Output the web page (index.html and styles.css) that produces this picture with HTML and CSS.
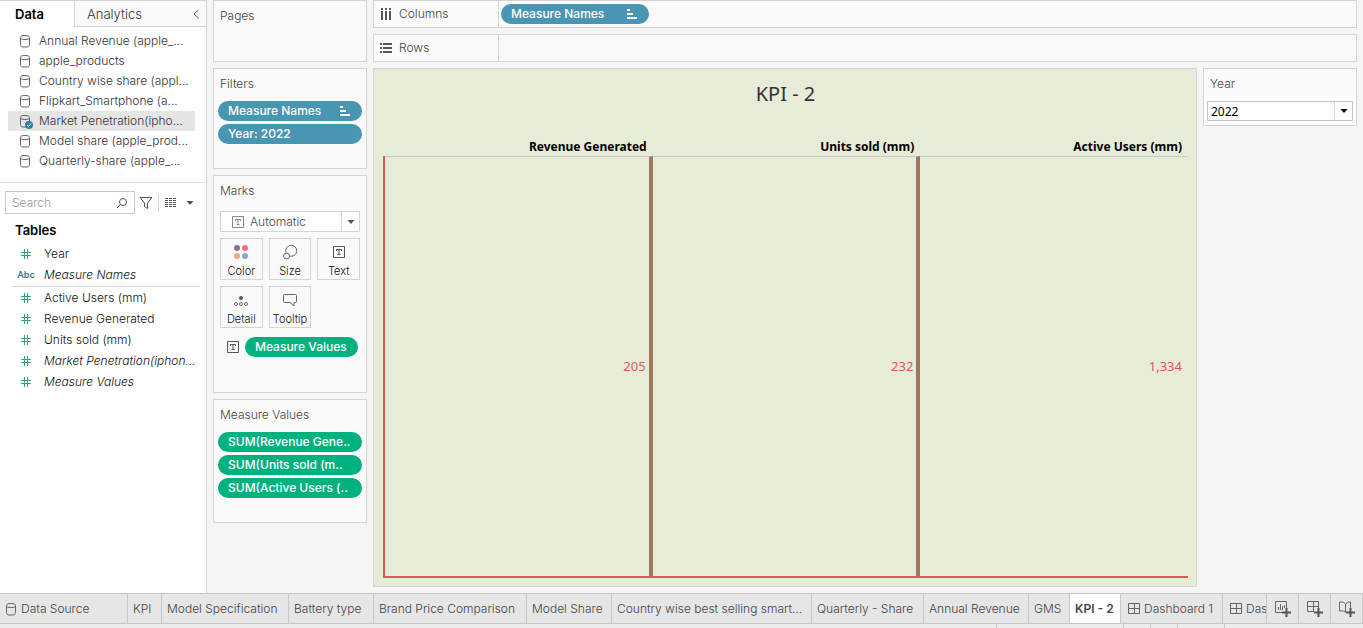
FILE: index.html
```html
<!DOCTYPE html>
<html lang="en">
<head>
<meta charset="utf-8">
<title>KPI - 2</title>
<link rel="stylesheet" href="styles.css">
</head>
<body>
<svg class="defs" aria-hidden="true">
  <symbol id="db" viewBox="0 0 12 14"><path d="M1.500 3.500v7c0 1.500 1 2.500 2.500 2.500h4c1.500 0 2.500-1 2.500-2.500v-7M1.500 3.500C1.500 2 3 1.500 6 1.500s4.500.5 4.500 2S9 5.500 6 5.500 1.500 5 1.500 3.500z" fill="none" stroke="#666"/></symbol>
  <symbol id="hash" viewBox="0 0 12 12"><path d="M4.500 1v10M7.500 1v10M1 4.500h10M1 7.500h10" fill="none" stroke="#3c9f7c"/></symbol>
  <symbol id="sort" viewBox="0 0 12 12"><path d="M1 1h3v2H1zM1 5h6v2H1zM1 9h10v2H1z" fill="#fff"/></symbol>
  <symbol id="tbox" viewBox="0 0 14 12"><path d="M1.500.5h11v11h-11z" fill="none" stroke="currentColor"/><path d="M4.500 5V3.500h5V5M7 3.500v5M5.500 8.500h3" fill="none" stroke="currentColor"/></symbol>
  <symbol id="caret" viewBox="0 0 8 6"><path d="M.5 1h7L4 5z" fill="currentColor"/></symbol>
  <symbol id="dash" viewBox="0 0 12 12"><path d="M.5.5h11v10H.5zM.5 5.500h11M6.500.5v10" fill="none" stroke="#666"/></symbol>
</svg>
<main class="workspace">
  <aside class="data-pane">
    <div class="pane-tabs">
      <button class="pane-tab pane-tab-on">Data</button>
      <button class="pane-tab">Analytics</button>
      <button class="collapse" aria-label="Collapse"><svg width="8" height="10" viewBox="0 0 8 10"><path d="M6.500 1L2 5l4.500 4" fill="none" stroke="#555"/></svg></button>
    </div>
    <ul class="sources">
      <li><svg class="db"><use href="#db"/></svg>Annual Revenue (apple_...</li>
      <li><svg class="db"><use href="#db"/></svg>apple_products</li>
      <li><svg class="db"><use href="#db"/></svg>Country wise share (appl...</li>
      <li><svg class="db"><use href="#db"/></svg>Flipkart_Smartphone (a...</li>
      <li class="source-on"><svg class="db"><use href="#db"/></svg><svg class="check" viewBox="0 0 8 8"><circle cx="4" cy="4" r="4" fill="#2f7f9f"/><path d="M2 4l1.500 1.500L6 2.500" fill="none" stroke="#fff"/></svg>Market Penetration(ipho...</li>
      <li><svg class="db"><use href="#db"/></svg>Model share (apple_prod...</li>
      <li><svg class="db"><use href="#db"/></svg>Quarterly-share (apple_...</li>
    </ul>
    <div class="search-row">
      <label class="search"><input type="text" placeholder="Search" aria-label="Search"><svg width="12" height="12" viewBox="0 0 12 12"><circle cx="7" cy="5" r="3.500" fill="none" stroke="#555"/><path d="M4.500 7.500L1 11" stroke="#555"/></svg></label>
      <button class="tool" aria-label="Filter"><svg width="14" height="14" viewBox="0 0 14 14"><path d="M1 1.500h12L8.500 7v5.500l-3-2V7z" fill="none" stroke="#555"/></svg></button>
      <button class="tool view-as" aria-label="View as"><svg width="12" height="10" viewBox="0 0 12 10"><path d="M0 .5h12M0 2.500h12M0 4.500h12M0 6.500h12M0 8.500h12" stroke="#555" stroke-dasharray="3 1"/></svg><svg class="caret"><use href="#caret"/></svg></button>
    </div>
    <h2 class="tables-title">Tables</h2>
    <ul class="fields fields-dim">
      <li><svg class="hash"><use href="#hash"/></svg>Year</li>
      <li><span class="abc">Abc</span><i>Measure Names</i></li>
    </ul>
    <ul class="fields">
      <li><svg class="hash"><use href="#hash"/></svg>Active Users (mm)</li>
      <li><svg class="hash"><use href="#hash"/></svg>Revenue Generated</li>
      <li><svg class="hash"><use href="#hash"/></svg>Units sold (mm)</li>
      <li><svg class="hash"><use href="#hash"/></svg><i>Market Penetration(iphon...</i></li>
      <li><svg class="hash"><use href="#hash"/></svg><i>Measure Values</i></li>
    </ul>
  </aside>

  <section class="cards">
    <div class="card card-pages"><h3>Pages</h3></div>
    <div class="card card-filters"><h3>Filters</h3>
      <div class="pills">
        <button class="pill blue">Measure Names<svg class="sort"><use href="#sort"/></svg></button>
        <button class="pill blue">Year: 2022</button>
      </div>
    </div>
    <div class="card card-marks"><h3>Marks</h3>
      <div class="mark-type"><svg class="tbox"><use href="#tbox"/></svg><select aria-label="Mark type"><option>Automatic</option></select><span class="drop"><svg class="caret"><use href="#caret"/></svg></span></div>
      <div class="mark-grid">
        <button><svg width="16" height="16" viewBox="0 0 16 16"><circle cx="4" cy="4" r="3" fill="#85709b"/><circle cx="12" cy="4" r="3" fill="#fa6e80"/><circle cx="4" cy="12" r="3" fill="#f5a67c"/><circle cx="12" cy="12" r="3" fill="#82a6cf"/></svg>Color</button>
        <button><svg width="16" height="16" viewBox="0 0 16 16"><path d="M4 8.500a5.500 5.500 0 1 1 3.500 3.500" fill="none" stroke="#666"/><circle cx="4.500" cy="12" r="3" fill="none" stroke="#666"/></svg>Size</button>
        <button><svg class="tbox"><use href="#tbox"/></svg>Text</button>
        <button><svg width="16" height="16" viewBox="0 0 16 16"><circle cx="8" cy="6" r="2" fill="#555"/><g fill="none" stroke="#666"><circle cx="3" cy="12" r="1.500"/><circle cx="8" cy="12" r="1.500"/><circle cx="13" cy="12" r="1.500"/></g></svg>Detail</button>
        <button><svg width="16" height="16" viewBox="0 0 16 16"><path d="M1.500 3.500q0-1 1-1h11q1 0 1 1v6q0 1-1 1H12v3.500l-4-3.500H2.500q-1 0-1-1z" fill="none" stroke="#666"/></svg>Tooltip</button>
      </div>
      <div class="mark-pill"><svg class="tbox"><use href="#tbox"/></svg><button class="pill green">Measure Values</button></div>
    </div>
    <div class="card card-values"><h3>Measure Values</h3>
      <div class="pills">
        <button class="pill green">SUM(Revenue Gene..</button>
        <button class="pill green">SUM(Units sold (m..</button>
        <button class="pill green">SUM(Active Users (..</button>
      </div>
    </div>
  </section>

  <section class="stage">
    <div class="shelf"><div class="shelf-name"><svg width="12" height="12" viewBox="0 0 12 12"><path d="M2 0v2M2 3v9M6 0v2M6 3v9M10 0v2M10 3v9" stroke="#555" stroke-width="2"/></svg>Columns</div><button class="pill blue shelf-pill">Measure Names<svg class="sort"><use href="#sort"/></svg></button></div>
    <div class="shelf"><div class="shelf-name"><svg width="12" height="12" viewBox="0 0 12 12"><path d="M0 2h2M3 2h9M0 6h2M3 6h9M0 10h2M3 10h9" stroke="#555" stroke-width="2"/></svg>Rows</div></div>
    <div class="view-row">
      <div class="view">
        <h1>KPI - 2</h1>
        <table>
          <thead><tr><th>Revenue Generated</th><th>Units sold (mm)</th><th>Active Users (mm)</th></tr></thead>
          <tbody><tr><td>205</td><td>232</td><td>1,334</td></tr></tbody>
        </table>
      </div>
      <div class="card year-card"><h3><label for="year">Year</label></h3>
        <div class="year-box"><select id="year"><option>2022</option></select><span class="drop"><svg class="caret"><use href="#caret"/></svg></span></div>
      </div>
    </div>
  </section>
</main>
<nav class="sheets">
  <button class="sheet sheet-source"><svg class="db"><use href="#db"/></svg>Data Source</button>
  <button class="sheet w-kpi">KPI</button>
  <button class="sheet w-model">Model Specification</button>
  <button class="sheet w-short">Battery type</button>
  <button class="sheet w-brand">Brand Price Comparison</button>
  <button class="sheet w-short">Model Share</button>
  <button class="sheet w-country">Country wise best selling smart...</button>
  <button class="sheet w-quarter">Quarterly - Share</button>
  <button class="sheet w-annual">Annual Revenue</button>
  <button class="sheet w-gms">GMS</button>
  <button class="sheet sheet-on">KPI - 2</button>
  <button class="sheet w-dash"><svg class="dash"><use href="#dash"/></svg>Dashboard 1</button>
  <button class="sheet sheet-cut"><svg class="dash"><use href="#dash"/></svg>Das</button>
  <button class="sheet sheet-new" aria-label="New worksheet"><svg width="16" height="16" viewBox="0 0 16 16"><path d="M8 11.500H.5V.5h11V7M3.500 9V6M5.500 9V3M7.500 9V5M9.500 7V4" fill="none" stroke="#666"/><path d="M11.500 7v9M7 11.500h9" stroke="#555" stroke-width="2"/></svg></button>
  <button class="sheet sheet-new" aria-label="New dashboard"><svg width="16" height="16" viewBox="0 0 16 16"><path d="M7 10.500H.5V.5h11V7M.5 5.500h11M6.500.5v10" fill="none" stroke="#666"/><path d="M11.500 7v9M7 11.500h9" stroke="#555" stroke-width="2"/></svg></button>
  <button class="sheet sheet-new" aria-label="New story"><svg width="16" height="16" viewBox="0 0 16 16"><path d="M7 11.500L5 10H.5V1H4l2.500 2L9 1h2.500v6M6.500 3v8" fill="none" stroke="#666"/><path d="M11.500 7v9M7 11.500h9" stroke="#555" stroke-width="2"/></svg></button>
</nav>
<footer class="status"><span class="nav-cell nav-wide"></span><span class="nav-cell"></span><span class="nav-cell"></span><span class="nav-cell nav-mid"></span><span class="nav-cell nav-end"></span></footer>
</body>
</html>
```
FILE: styles.css
```css
* { box-sizing: border-box; }
body {
  margin: 0;
  height: 100vh;
  display: flex;
  flex-direction: column;
  background: #f5f5f5;
  color: #333;
  font: 300 12px/20px Inter, "Liberation Sans", sans-serif;
  overflow: hidden;
}
button, select, input { font: inherit; color: inherit; margin: 0; padding: 0; border: 0; background: none; }
select { appearance: none; outline: 0; }
ul { list-style: none; margin: 0; padding: 0; }
h1, h2, h3 { margin: 0; font-weight: inherit; }
svg { flex: none; display: block; }
.defs { position: absolute; width: 0; height: 0; }
.db { width: 12px; height: 14px; }
.hash { width: 12px; height: 12px; }
.sort { width: 12px; height: 12px; }
.tbox { width: 14px; height: 12px; color: #555; }
.dash { width: 12px; height: 12px; }
.caret { width: 8px; height: 6px; color: #555; }

.workspace { flex: 1; min-height: 0; display: flex; gap: 6px; padding-right: 6px; }
.data-pane { width: 207px; flex: none; background: #fff; border-right: 1px solid #d4d4d4; }
.pane-tabs { display: flex; height: 27px; border-top: 1px solid #d4d4d4; font-size: 13px; }
.pane-tab { padding: 0 0 0 12px; background: #fafafa; border-bottom: 1px solid #d4d4d4; }
.pane-tab-on { width: 75px; padding: 0 15px; text-align: left; background: #fff; color: #000; font-weight: 600; border-bottom: 0; border-right: 1px solid #d4d4d4; }
.collapse { flex: 1; display: flex; justify-content: flex-end; align-items: center; padding-right: 6px; background: #fafafa; border-bottom: 1px solid #d4d4d4; }
.sources { padding: 4px 11px 11px 8px; border-bottom: 1px solid #e0e0e0; white-space: nowrap; }
.sources li { position: relative; display: flex; align-items: center; height: 20px; gap: 8px; padding-left: 11px; }
.sources .source-on { background: #e5e5e5; }
.check { position: absolute; left: 17px; top: 10px; width: 8px; height: 8px; }
.search-row { display: flex; align-items: center; height: 23px; margin: 8px 0 0 5px; }
.search { display: flex; align-items: center; width: 130px; height: 23px; padding: 0 6px; border: 1px solid #c8c8c8; }
.search input { flex: 1; min-width: 0; outline: 0; }
.search input::placeholder { color: #999; opacity: 1; }
.tool { display: flex; align-items: center; padding: 0 5px 0 4px; }
.view-as { height: 18px; gap: 9px; border-left: 1px solid #d4d4d4; padding-left: 6px; }
.tables-title { margin: 6px 0 3px 15px; color: #000; font-size: 13px; font-weight: 600; }
.fields { margin: 0 6px 0 12px; color: #111; white-space: nowrap; }
.fields li { display: flex; align-items: center; height: 21px; padding-left: 8px; gap: 12px; }
.fields-dim { border-bottom: 1px solid #d9d9d9; padding-bottom: 1px; }
.abc { width: 20px; margin: 0 -4px; text-align: center; font-size: 9px; font-weight: 600; color: #2f7b96; }

.cards { width: 154px; flex: none; display: flex; flex-direction: column; gap: 6px; }
.card { background: #fafafa; border: 1px solid #d4d4d4; padding: 5px 4px; }
.card h3 { padding-left: 2px; font-size: 12px; line-height: 20px; color: #444; }
.card-pages { height: 62px; }
.card-filters { height: 101px; }
.card-marks { height: 218px; }
.card-values { height: 124px; }
.pills { display: flex; flex-direction: column; gap: 3px; margin-top: 7px; }
.pill { display: flex; align-items: center; justify-content: space-between; height: 20px; padding: 0 11px 0 10px; border-radius: 10px; color: #fff; font-weight: 500; white-space: nowrap; }
.blue { background: #4996b2; }
.green { background: #00b180; }
.mark-type { display: flex; align-items: center; height: 21px; margin: 10px 2px 6px; padding-left: 10px; gap: 5px; background: #fff; border: 1px solid #d4d4d4; color: #444; }
.mark-type .tbox { color: #888; }
.mark-type select { flex: 1; min-width: 0; height: 19px; }
.drop { align-self: stretch; width: 18px; flex: none; display: flex; align-items: center; justify-content: center; border-left: 1px solid #d4d4d4; }
.mark-grid { display: grid; grid-template-columns: repeat(3, 1fr); gap: 6px; margin: 0 2px; }
.mark-grid button { display: flex; flex-direction: column; align-items: center; justify-content: space-between; height: 42px; padding-top: 5px; border: 1px solid #d4d4d4; color: #111; font-size: 11px; line-height: 16px; }
.mark-grid .tbox { margin-top: 2px; }
.mark-pill { display: flex; align-items: center; gap: 5px; margin: 9px 4px 0 8px; }

.stage { flex: 1; min-width: 0; display: flex; flex-direction: column; gap: 6px; padding-bottom: 6px; }
.shelf { display: flex; align-items: center; height: 28px; background: #fafafa; border: 1px solid #d4d4d4; color: #444; }
.shelf-name { display: flex; align-items: center; gap: 7px; width: 125px; height: 26px; padding-left: 6px; border-right: 1px solid #d4d4d4; }
.shelf-pill { width: 148px; margin-left: 2px; }
.view-row { flex: 1; min-height: 0; display: flex; align-items: flex-start; gap: 6px; }
.view { align-self: stretch; flex: 1; min-width: 0; display: flex; flex-direction: column; padding: 8px 8px 8px 9px; background: #e7ecd9; border: 1px solid #d4d4d4; font-family: "Noto Sans", sans-serif; font-weight: 400; }
.view h1 { text-align: center; font-size: 20px; line-height: 34px; color: #333; }
.view table { flex: 1; display: flex; flex-direction: column; }
.view thead { display: block; padding: 27px 0 0 2px; }
.view tbody { flex: 1; display: flex; border-left: 2px solid #e15759; border-bottom: 2px solid #e15759; }
.view tr { flex: 1; display: grid; grid-template-columns: repeat(3, 1fr); }
.view th { padding: 0 6px 0 0; line-height: 18px; font-size: 12px; font-weight: 700; text-align: right; color: #000; }
.view td { display: flex; align-items: center; justify-content: flex-end; padding: 0 6px 2px 0; border-top: 1px solid #c8c9c8; font-size: 13px; color: #e15759; }
.view td:not(:last-child) { padding-right: 3px; border-right: 4px solid #a0765f; }
.year-card { width: 154px; flex: none; height: 58px; padding: 5px 3px; background: linear-gradient(#fafafa 28px, #fff 28px); }
.year-card h3 { padding-left: 3px; }
.year-box { display: flex; height: 20px; margin-top: 7px; background: #fff; border: 1px solid #c4c4c4; color: #000; font-family: "Noto Sans", sans-serif; font-weight: 400; }
.year-box select { flex: 1; min-width: 0; padding-left: 3px; }
.year-box .caret { color: #000; }

.sheets { display: flex; height: 31px; background: #e6e6e6; border-top: 1px solid #c8c8c8; border-bottom: 1px solid #c8c8c8; color: #444; }
.sheet { display: flex; align-items: center; padding-left: 5px; gap: 4px; border-right: 1px solid #c8c8c8; white-space: nowrap; overflow: hidden; flex: none; }
.sheet-source { width: 128px; }
.w-kpi { width: 34px; }
.w-model { width: 127px; }
.w-short { width: 85px; }
.w-brand { width: 153px; }
.w-country { width: 200px; }
.w-quarter { width: 112px; }
.w-annual { width: 105px; }
.w-gms { width: 41px; }
.sheet-on { width: 51px; background: #fff; font-weight: 600; }
.w-dash { width: 102px; padding-left: 7px; }
.sheet-cut { flex: 1 1 0; min-width: 0; padding-left: 7px; }
.sheet-new { width: 32px; padding: 0; justify-content: center; }
.status { display: flex; justify-content: flex-end; height: 4px; background: #ebebeb; }
.nav-cell { width: 27px; border-left: 1px solid #c8c8c8; }
.nav-wide { width: 127px; }
.nav-mid { width: 47px; }
.nav-end { width: 139px; }
```
